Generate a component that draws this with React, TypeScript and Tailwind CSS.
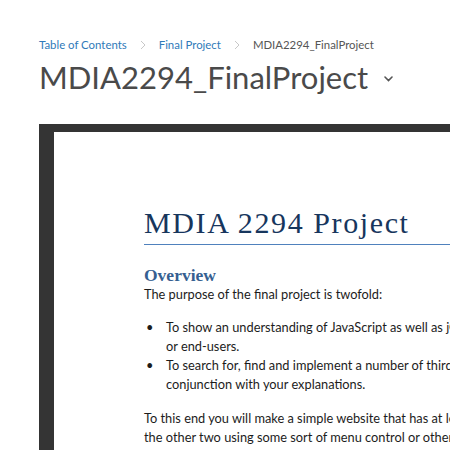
function Crumb() {
  return (
    <svg className="mx-[13px] shrink-0" width="6" height="10" viewBox="0 0 6 10" fill="none">
      <path d="M1 1l4 4-4 4" stroke="#c8c8c8" strokeWidth="1" />
    </svg>
  );
}

export default function App() {
  return (
    <div className="w-[450px] h-[450px] overflow-hidden bg-white" style={{ fontFamily: "Lato, sans-serif" }}>
      <div className="pl-[39px] pt-[38px]">
        {/* breadcrumb */}
        <div className="flex items-center text-[11.4px] leading-[14px] whitespace-nowrap">
          <span className="text-[#2f7ab9]">Table of Contents</span>
          <Crumb />
          <span className="text-[#2f7ab9]">Final Project</span>
          <Crumb />
          <span className="text-[#555]">MDIA2294_FinalProject</span>
        </div>

        {/* title */}
        <div className="flex items-center mt-[5px] whitespace-nowrap">
          <h1 className="text-[31px] leading-[40px] text-[#4a4a4a]">MDIA2294_FinalProject</h1>
          <svg className="ml-[16px] mt-[4px]" width="9" height="6" viewBox="0 0 9 6" fill="none">
            <path d="M1 1l3.5 3.5L8 1" stroke="#555" strokeWidth="1.6" strokeLinecap="round" />
          </svg>
        </div>

        {/* document preview */}
        <div className="mt-[27px] bg-[#343434] pl-[15px] pt-[8px] w-[420px] h-[400px]">
          <div className="bg-white h-full pl-[90px] pt-[73px] whitespace-nowrap">
            <div
              className="text-[30px] leading-[36px] tracking-[1.6px] text-[#17365d]"
              style={{ fontFamily: "'Liberation Serif', serif" }}
            >
              MDIA 2294 Project
            </div>
            <div className="mt-[3px] h-px bg-[#4f81bd]" />

            <div
              className="mt-[20px] text-[17.5px] leading-[20px] font-bold text-[#365f91]"
              style={{ fontFamily: "'Liberation Serif', serif" }}
            >
              Overview
            </div>
            <div className="text-[12.8px] leading-[19px] text-[#1c1c1c]">
              <p>The purpose of the final project is twofold:</p>
              <ul className="mt-[14px]">
                <li className="flex">
                  <span className="w-[22px] shrink-0 pl-[2px]">•</span>
                  <span>
                    To show an understanding of JavaScript as well as jQuery
                    <br />
                    or end-users.
                  </span>
                </li>
                <li className="flex">
                  <span className="w-[22px] shrink-0 pl-[2px]">•</span>
                  <span>
                    To search for, find and implement a number of third
                    <br />
                    conjunction with your explanations.
                  </span>
                </li>
              </ul>
              <p className="mt-[15px]">
                To this end you will make a simple website that has at least
                <br />
                the other two using some sort of menu control or other
              </p>
            </div>
          </div>
        </div>
      </div>
    </div>
  );
}
